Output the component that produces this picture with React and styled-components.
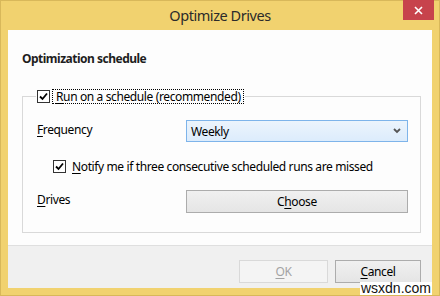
import styled, { createGlobalStyle } from "styled-components";

const GlobalStyle = createGlobalStyle`
  html, body {
    margin: 0;
    padding: 0;
    background: #ffffff;
  }
  body {
    font-family: "Segoe UI", "Noto Sans", sans-serif;
    font-size: 12px;
    letter-spacing: -0.38px;
    color: #000;
  }
`;

const Window = styled.div`
  position: relative;
  width: 440px;
  height: 296px;
  box-sizing: border-box;
  display: flex;
  flex-direction: column;
  background: #f1d26f;
  border: 1px solid #d8b85a;
  padding: 0 7px 7px 7px;
`;

const TitleBar = styled.div`
  position: relative;
  height: 29px;
  flex: none;
  display: flex;
  align-items: center;
  justify-content: center;
`;

const Title = styled.div`
  font-size: 14.5px;
  letter-spacing: -0.45px;
  color: #2b2b2b;
  padding-bottom: 1px;
`;

const CloseButton = styled.div`
  position: absolute;
  top: -1px;
  right: -2px;
  width: 31px;
  height: 20px;
  background: #c7434c;
  display: flex;
  align-items: center;
  justify-content: center;
`;

const Client = styled.div`
  flex: 1;
  display: flex;
  flex-direction: column;
  background: #fdfdfd;
`;

const Content = styled.div`
  flex: 1;
  padding: 21px 11px 0 14px;
`;

const Heading = styled.div`
  font-weight: bold;
  letter-spacing: -0.5px;
  color: #1e1e1e;
  line-height: 16px;
  margin-bottom: 22px;
`;

const Group = styled.fieldset`
  margin: 0;
  padding: 16px 12px 19px 14px;
  border: 1px solid #d9d9d9;
  display: grid;
  grid-template-columns: 149px 1fr;
  row-gap: 17px;
  align-items: center;
`;

const Legend = styled.legend`
  margin-left: -1px;
  padding: 0 1px;
  display: flex;
  align-items: center;
  gap: 2px;
  line-height: 14px;
`;

const Box = styled.span`
  width: 11px;
  height: 11px;
  flex: none;
  border: 1px solid #333;
  background: #fff;
  display: flex;
  align-items: center;
  justify-content: center;
`;

const FocusLabel = styled.span`
  border: 1px dotted #000;
  padding: 0 2px 0 3px;
  line-height: 13px;
`;

const Label = styled.span`
  color: #000;
  align-self: start;
  margin-top: 1px;
`;

const Key = styled.span`
  text-decoration: underline;
  text-underline-offset: 2px;
`;

const Select = styled.div`
  height: 22px;
  box-sizing: border-box;
  border: 1px solid #7eb4ea;
  background: linear-gradient(#ecf4fc, #dcecfc);
  display: flex;
  align-items: center;
  justify-content: space-between;
  padding: 0 6px 0 4px;
`;

const CheckRow = styled.label`
  grid-column: 1 / -1;
  height: 14px;
  display: flex;
  align-items: center;
  gap: 6px;
  padding-left: 16px;
`;

const Button = styled.div`
  height: 23px;
  box-sizing: border-box;
  display: flex;
  align-items: center;
  justify-content: center;
  border: 1px solid ${(p) => (p.disabled ? "#d9d9d9" : "#acacac")};
  background: ${(p) =>
    p.disabled ? "#f4f4f4" : "linear-gradient(#f0f0f0, #e5e5e5)"};
  color: ${(p) => (p.disabled ? "#a3a3a3" : "#000")};
  width: ${(p) => p.width || "auto"};
`;

const Footer = styled.div`
  height: 43px;
  border-top: 1px solid #dfdfdf;
  background: #f0f0f0;
  display: flex;
  justify-content: flex-end;
  align-items: flex-start;
  gap: 7px;
  padding: 14px 11px 0 0;
  box-sizing: border-box;
`;

const Watermark = styled.div`
  position: absolute;
  right: 7px;
  bottom: 0;
  background: #fff;
  font-family: "Liberation Sans", sans-serif;
  font-size: 14px;
  letter-spacing: 0;
  line-height: 13px;
  padding: 0 1px;
  color: #111;
`;

function Check() {
  return (
    <Box>
      <svg width="9" height="9" viewBox="0 0 9 9">
        <path d="M1 4.5 L3.5 7 L8 1.5" fill="none" stroke="#000" strokeWidth="1.8" />
      </svg>
    </Box>
  );
}

export default function App() {
  return (
    <>
      <GlobalStyle />
      <Window>
        <TitleBar>
          <Title>Optimize Drives</Title>
          <CloseButton>
            <svg width="9" height="9" viewBox="0 0 9 9">
              <path d="M1 1 L8 8 M8 1 L1 8" stroke="#fff" strokeWidth="1.6" />
            </svg>
          </CloseButton>
        </TitleBar>
        <Client>
          <Content>
            <Heading>Optimization schedule</Heading>
            <Group>
              <Legend>
                <Check />
                <FocusLabel>
                  <Key>R</Key>un on a schedule (recommended)
                </FocusLabel>
              </Legend>
              <Label>
                <Key>F</Key>requency
              </Label>
              <Select>
                <span>Weekly</span>
                <svg width="8" height="6" viewBox="0 0 8 6">
                  <path d="M1 1 L4 4 L7 1" fill="none" stroke="#555" strokeWidth="1.8" />
                </svg>
              </Select>
              <CheckRow>
                <Check />
                <span>
                  <Key>N</Key>otify me if three consecutive scheduled runs are missed
                </span>
              </CheckRow>
              <Label>
                <Key>D</Key>rives
              </Label>
              <Button>
                C<Key>h</Key>oose
              </Button>
            </Group>
          </Content>
          <Footer>
            <Button disabled width="89px">
              <Key>O</Key>K
            </Button>
            <Button width="86px">
              <Key>C</Key>ancel
            </Button>
          </Footer>
        </Client>
        <Watermark>wsxdn.com</Watermark>
      </Window>
    </>
  );
}
